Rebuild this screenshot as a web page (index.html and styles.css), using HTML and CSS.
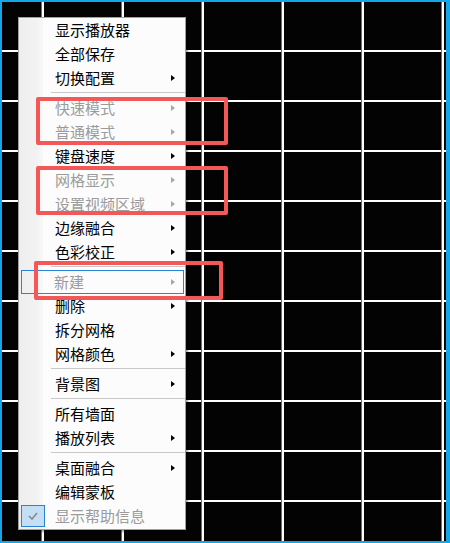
FILE: index.html
```html
<!DOCTYPE html>
<html lang="zh-CN">
<head>
    <meta charset="UTF-8">
    <meta name="viewport" content="width=device-width, initial-scale=1.0">
    <title>网格右键菜单</title>
    <link rel="stylesheet" href="styles.css">
</head>
<body>
    <!-- 拼接墙画布 -->
    <div class="screen">
        <!-- 右键菜单 -->
        <ul class="menu">
            <li class="item">显示播放器</li>
            <li class="item">全部保存</li>
            <li class="item">切换配置<span class="arrow"></span></li>
            <li class="sep"></li>
            <li class="item disabled">快速模式<span class="arrow"></span></li>
            <li class="item disabled">普通模式<span class="arrow"></span></li>
            <li class="item">键盘速度<span class="arrow"></span></li>
            <li class="item disabled">网格显示<span class="arrow"></span></li>
            <li class="item disabled">设置视频区域<span class="arrow"></span></li>
            <li class="item">边缘融合<span class="arrow"></span></li>
            <li class="item">色彩校正<span class="arrow"></span></li>
            <li class="sep"></li>
            <li class="item disabled focused">新建<span class="arrow"></span></li>
            <li class="item">删除<span class="arrow"></span></li>
            <li class="item">拆分网格</li>
            <li class="item">网格颜色<span class="arrow"></span></li>
            <li class="sep"></li>
            <li class="item">背景图<span class="arrow"></span></li>
            <li class="sep"></li>
            <li class="item">所有墙面</li>
            <li class="item">播放列表<span class="arrow"></span></li>
            <li class="sep"></li>
            <li class="item">桌面融合<span class="arrow"></span></li>
            <li class="item">编辑蒙板</li>
            <li class="item disabled">
                <span class="check">
                    <svg width="10" height="8" viewBox="0 0 10 8"><polyline points="1,4 4,7 9,1" fill="none" stroke="#8a8a8a" stroke-width="1.6"/></svg>
                </span>
                显示帮助信息
            </li>
        </ul>

        <!-- 标注框 -->
        <div class="mark mark-1"></div>
        <div class="mark mark-2"></div>
        <div class="mark mark-3"></div>
    </div>
</body>
</html>
```

FILE: styles.css
```css
html, body {
    margin: 0;
    padding: 0;
}

body {
    font-family: "Noto Sans CJK SC", "Microsoft YaHei", sans-serif;
    background-color: #000;
}

/* 画布 - 黑底白色网格 */
.screen {
    position: relative;
    width: 450px;
    height: 543px;
    box-sizing: border-box;
    border: 2px solid #12a6ea;
    border-right-width: 4px;
    background-color: #030303;
    background-image:
        linear-gradient(to right, transparent 39px, #6f6f6f 39px, #6f6f6f 40px, #fff 40px, #fff 42px, transparent 42px),
        linear-gradient(to bottom, transparent 48px, #fff 48px, #fff 50px, #707070 50px, #707070 51px, transparent 51px);
    background-size: 80px 50px, 80px 50px;
    overflow: hidden;
}

/* 右键菜单 */
.menu {
    position: absolute;
    left: 16px;
    top: 15px;
    width: 168px;
    box-sizing: border-box;
    margin: 0;
    padding: 0 0 1px;
    list-style: none;
    border: 1px solid #a0a0a0;
    background: linear-gradient(to right, #eeeeee 0, #f2f2f2 18px, #f8f8f8 24px, #fcfcfc 24px);
    box-shadow: 2px 2px 2px rgba(0,0,0,0.35);
}

.item {
    position: relative;
    display: flex;
    align-items: center;
    height: 24px;
    padding-left: 36px;
    font-size: 15px;
    line-height: 24px;
    color: #000;
}

.item.disabled {
    color: #9b9b9b;
}

/* 子菜单箭头 */
.arrow {
    margin-left: auto;
    margin-right: 10px;
    width: 0;
    height: 0;
    border-left: 4px solid #000;
    border-top: 3.5px solid transparent;
    border-bottom: 3.5px solid transparent;
}

.item.disabled .arrow {
    border-left-color: #a6a6a6;
}

/* 键盘焦点框 */
.item.focused {
    margin: 0 1px 0 2px;
    padding-left: 33px;
    outline: 1px solid #2a83d6;
    outline-offset: -1px;
}

.item.focused .arrow {
    margin-right: 9px;
}

/* 勾选标记 */
.check {
    position: absolute;
    left: 2px;
    top: 1px;
    width: 24px;
    height: 22px;
    box-sizing: border-box;
    border: 1px solid #2a83d6;
    background-color: #c3def5;
    display: flex;
    align-items: center;
    justify-content: center;
}

.sep {
    height: 6px;
    box-sizing: border-box;
    padding-top: 2px;
    margin-left: 32px;
}

.sep::before {
    content: "";
    display: block;
    height: 1px;
    background-color: #c8c8c8;
}

/* 红色标注框 */
.mark {
    position: absolute;
    box-sizing: border-box;
    border: 4px solid #f25858;
    border-radius: 2px;
}

.mark-1 {
    left: 34px;
    top: 95px;
    width: 192px;
    height: 48px;
}

.mark-2 {
    left: 34px;
    top: 164px;
    width: 192px;
    height: 49px;
}

.mark-3 {
    left: 32px;
    top: 259px;
    width: 189px;
    height: 39px;
}
```
